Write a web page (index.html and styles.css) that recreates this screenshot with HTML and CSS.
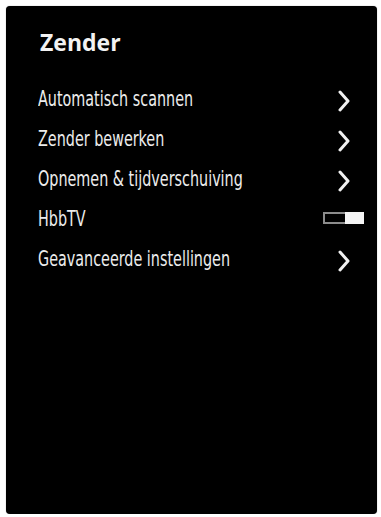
FILE: index.html
```html
<!DOCTYPE html>
<html lang="nl">
<head>
<meta charset="utf-8">
<title>Zender</title>
<link rel="stylesheet" href="styles.css">
</head>
<body>
<div class="panel">
  <h1 class="title">Zender</h1>
  <ul class="menu">
    <li class="row"><span class="label">Automatisch scannen</span><span class="slot"><svg class="chev" width="12" height="22" viewBox="0 0 12 22"><polyline points="2,2 10,11 2,20"/></svg></span></li>
    <li class="row"><span class="label">Zender bewerken</span><span class="slot"><svg class="chev" width="12" height="22" viewBox="0 0 12 22"><polyline points="2,2 10,11 2,20"/></svg></span></li>
    <li class="row"><span class="label">Opnemen &amp; tijdverschuiving</span><span class="slot"><svg class="chev" width="12" height="22" viewBox="0 0 12 22"><polyline points="2,2 10,11 2,20"/></svg></span></li>
    <li class="row"><span class="label">HbbTV</span><span class="slot"><span class="toggle"><span class="toggle-off"></span><span class="toggle-on"></span></span></span></li>
    <li class="row"><span class="label">Geavanceerde instellingen</span><span class="slot"><svg class="chev" width="12" height="22" viewBox="0 0 12 22"><polyline points="2,2 10,11 2,20"/></svg></span></li>
  </ul>
</div>
</body>
</html>
```

FILE: styles.css
```css
html, body {
  margin: 0;
  padding: 0;
  background: #fff;
}

.panel {
  box-sizing: border-box;
  margin: 6px 0 0 6px;
  width: 371px;
  height: 508px;
  background: #000;
  border-radius: 4px;
  padding: 21px 13px 0 0;
  box-shadow: 0 0 1px rgba(0,0,0,0.5);
}

.title {
  margin: 0 0 22px 34px;
  font-family: "Open Sans", "DejaVu Sans", sans-serif;
  font-weight: 700;
  font-size: 23px;
  line-height: 30px;
  color: #f2f2f2;
}

.menu {
  list-style: none;
  margin: 0;
  padding: 0 0 0 32px;
}

.row {
  display: flex;
  align-items: center;
  justify-content: space-between;
  height: 40px;
}

.label {
  display: inline-block;
  font-family: "DejaVu Sans Condensed", "DejaVu Sans", sans-serif;
  font-stretch: condensed;
  font-size: 21px;
  line-height: 40px;
  color: #ececec;
  white-space: nowrap;
  transform: scaleX(0.76);
  transform-origin: left center;
}

.slot {
  width: 41px;
  display: flex;
  justify-content: center;
  align-items: center;
}

.chev {
  display: block;
  margin-top: 4px;
}

.chev polyline {
  fill: none;
  stroke: #f0f0f0;
  stroke-width: 3;
  stroke-linecap: round;
  stroke-linejoin: round;
}

.toggle {
  display: flex;
  width: 41px;
  height: 12px;
  margin-top: -2px;
}

.toggle-off {
  box-sizing: border-box;
  width: 22px;
  height: 12px;
  border: 2px solid #8c8c8c;
  border-right: none;
  background: #000;
}

.toggle-on {
  flex: 1;
  height: 12px;
  background: #f4f4f4;
}
```
